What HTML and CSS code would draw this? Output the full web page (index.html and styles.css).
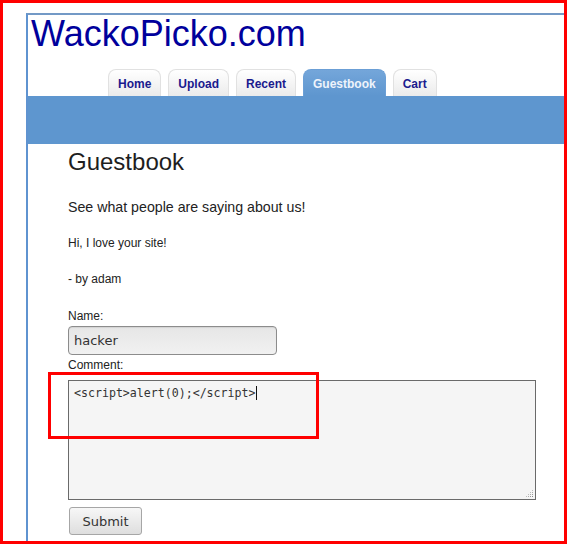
FILE: index.html
```html
<!DOCTYPE html>
<html>
<head>
  <title>WackoPicko.com - Guestbook</title>
  <link rel="stylesheet" href="styles.css">
</head>
<body>
  <div class="page">
    <div class="header">
      <h1 class="site-title">WackoPicko.com</h1>
      <ul class="tabs">
        <li><a href="#">Home</a></li>
        <li><a href="#">Upload</a></li>
        <li><a href="#">Recent</a></li>
        <li class="current"><a href="#">Guestbook</a></li>
        <li><a href="#">Cart</a></li>
      </ul>
    </div>
    <div class="bar"></div>

    <div class="content">
      <h2>Guestbook</h2>
      <p class="intro">See what people are saying about us!</p>

      <div class="entry">
        <p class="entry-text">Hi, I love your site!</p>
        <p class="entry-by">- by adam</p>
      </div>

      <form class="sign-form">
        <label for="name" class="name-label">Name:</label>
        <input type="text" id="name" value="hacker">
        <label for="comment" class="comment-label">Comment:</label>
        <div class="comment-wrap">
          <textarea id="comment">&lt;script&gt;alert(0);&lt;/script&gt;</textarea>
          <span class="caret"></span>
          <svg class="grip" width="9" height="9" viewBox="0 0 9 9">
            <rect x="7" y="1" width="1" height="1" fill="#bbb"/>
            <rect x="5" y="3" width="1" height="1" fill="#bbb"/>
            <rect x="7" y="3" width="1" height="1" fill="#aaa"/>
            <rect x="3" y="5" width="1" height="1" fill="#bbb"/>
            <rect x="5" y="5" width="1" height="1" fill="#aaa"/>
            <rect x="7" y="5" width="1" height="1" fill="#999"/>
            <rect x="1" y="7" width="1" height="1" fill="#bbb"/>
            <rect x="3" y="7" width="1" height="1" fill="#aaa"/>
            <rect x="5" y="7" width="1" height="1" fill="#999"/>
            <rect x="7" y="7" width="1" height="1" fill="#888"/>
          </svg>
          <span class="highlight"></span>
        </div>
        <button type="submit">Submit</button>
      </form>
    </div>
  </div>

  <!-- red annotation frame around the capture -->
  <div class="frame"></div>
</body>
</html>
```

FILE: styles.css
```css
html, body {
  margin: 0;
  padding: 0;
  height: 100%;
  overflow: hidden;
}

body {
  font-family: "Liberation Sans", Arial, sans-serif;
  color: #222;
  background-color: #fff;
}

.frame {
  position: fixed;
  top: 0;
  left: 0;
  right: 0;
  bottom: 0;
  border: 3px solid #f00;
  pointer-events: none;
}

.page {
  box-sizing: border-box;
  height: calc(100% - 13px);
  margin: 13px 0 0 26px;
  border-top: 2px solid #7399c6;
  border-left: 2px solid #5f93d0;
  overflow: hidden;
}

.site-title {
  margin: 0;
  padding-left: 3px;
  font-size: 36px;
  line-height: 38px;
  font-weight: normal;
  color: #00009c;
}

.tabs {
  list-style: none;
  margin: 16px 0 0 80px;
  padding: 0;
  display: flex;
  gap: 7px;
}

.tabs a {
  display: block;
  padding: 7px 9px 5px;
  line-height: 14px;
  font-size: 12px;
  font-weight: bold;
  color: #1a1a8e;
  text-decoration: none;
  background: linear-gradient(#ffffff, #ebebeb);
  border: 1px solid #e1e1e1;
  border-bottom: none;
  border-radius: 8px 8px 0 0;
}

.tabs .current a {
  color: #eef3fb;
  background: linear-gradient(#74a6da, #5e96cf);
  border-color: #6b9fd6;
}

.bar {
  height: 48px;
  background-color: #5e96cf;
}

.content {
  padding: 4px 0 0 40px;
}

.content h2 {
  margin: 0;
  font-size: 24px;
  line-height: 28px;
  font-weight: normal;
  color: #1e1e1e;
}

.intro {
  margin: 23px 0 0;
  font-size: 14.2px;
  line-height: 17px;
}

.entry p {
  margin: 0;
  font-size: 12px;
  line-height: 14px;
}

.entry-text {
  padding-top: 20px;
}

.entry-by {
  padding-top: 22px;
}

.sign-form {
  display: flex;
  flex-direction: column;
  align-items: flex-start;
  font-size: 12px;
  line-height: 14px;
}

.name-label {
  margin-top: 23px;
}

.sign-form input {
  margin-top: 3px;
  width: 209px;
  height: 29px;
  box-sizing: border-box;
  padding: 0 5px;
  font-family: "DejaVu Sans", sans-serif;
  font-size: 13px;
  color: #333;
  border: 1px solid #8c8c8c;
  border-radius: 4px;
  background: linear-gradient(#e6e6e6, #f1f1f1);
  box-shadow: inset 0 1px 1px rgba(0, 0, 0, 0.08);
}

.comment-label {
  margin-top: 3px;
}

.comment-wrap {
  position: relative;
  margin-top: 8px;
}

.comment-wrap textarea {
  display: block;
  width: 468px;
  height: 120px;
  box-sizing: border-box;
  margin: 0;
  padding: 5px 5px;
  font-family: "DejaVu Sans Mono", monospace;
  font-size: 11.6px;
  line-height: 14px;
  color: #333;
  background-color: #f5f5f5;
  border: 1px solid #6a6a6a;
  border-radius: 0;
  resize: none;
  outline: none;
}

.caret {
  position: absolute;
  left: 188px;
  top: 6px;
  width: 1px;
  height: 14px;
  background-color: #111;
}

.grip {
  position: absolute;
  right: 2px;
  bottom: 2px;
}

.highlight {
  position: absolute;
  left: -20px;
  top: -8px;
  width: 271px;
  height: 67px;
  box-sizing: border-box;
  border: 3px solid #f00;
  pointer-events: none;
}

.sign-form button {
  margin-top: 7px;
  width: 73px;
  height: 28px;
  margin-left: 1px;
  font-family: "DejaVu Sans", sans-serif;
  font-size: 13px;
  color: #333;
  border: 1px solid #a6a6a6;
  border-radius: 3px;
  background: linear-gradient(#f7f7f7, #dedede);
  cursor: pointer;
}
```
